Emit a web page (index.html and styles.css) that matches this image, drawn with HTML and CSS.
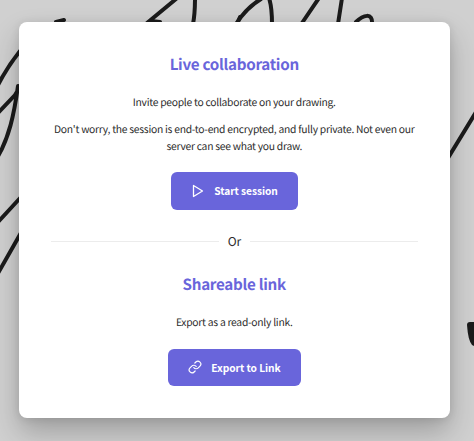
FILE: index.html
```
<!DOCTYPE html>
<html lang="en">
  <head>
    <meta charset="utf-8" />
    <title>Live collaboration</title>
    <meta name="viewport" content="width=device-width, initial-scale=1" />
    <link rel="stylesheet" href="styles.css" />
  </head>
  <body>
    <svg class="canvas" viewBox="0 0 474 441" aria-hidden="true">
      <path d="M-3 87C4 73 12 61 20 51M-1 112L15 95C18 91 20 87 22 82M-3 158C9 138 14 115 18 86" />
      <path d="M-1 221L22 196M-3 275L22 231" />
      <path d="M56 22L64 20M147 23L176 -1M151 21L160 22M195 -2C195 7 195 14 193 24M237 24L240 17" />
      <path d="M236 24C243 13 251 5 261 -1M269 -2C272 7 272 15 272 24M302 23L319 -2M342 -2L338 24M356 22C363 15 373 12 372 24" />
      <path d="M448 158L476 112" />
      <path class="blot" d="M467 325Q467 322 470 322H474V346L472 345Q468 340 467 325Z" />
    </svg>
    <div class="modal">
      <h3>Live collaboration</h3>
      <p class="intro">Invite people to collaborate on your drawing.</p>
      <p class="privacy">
        Don't worry, the session is end-to-end encrypted, and fully private. Not even our
        server can see what you draw.
      </p>
      <button class="start" type="button">
        <svg class="icon" viewBox="0 0 14 14">
          <path class="play" d="M2.5 1.5L11.5 7L2.5 12.5Z" />
        </svg>
        Start session
      </button>
      <div class="separator">Or</div>
      <h3>Shareable link</h3>
      <p class="intro">Export as a read-only link.</p>
      <button class="export" type="button">
        <svg class="icon" viewBox="0 0 24 24">
          <path d="M10 13a5 5 0 0 0 7.54.54l3-3a5 5 0 0 0-7.07-7.07l-1.72 1.71" />
          <path d="M14 11a5 5 0 0 0-7.54-.54l-3 3a5 5 0 0 0 7.07 7.07l1.71-1.71" />
        </svg>
        Export to Link
      </button>
    </div>
  </body>
</html>
```
FILE: styles.css
```
body {
  margin: 0;
  height: 441px;
  overflow: hidden;
  background-color: #d0d0d0;
  font-family: "Noto Sans CJK SC", "Noto Sans", sans-serif;
  color: #2b2b2b;
  text-rendering: geometricPrecision;
}

/* freehand strokes behind the dialog */
.canvas {
  position: absolute;
  top: 0;
  left: 0;
  width: 474px;
  height: 441px;
  fill: none;
  stroke: #1b1b1b;
  stroke-width: 4;
  stroke-linecap: round;
}

.canvas .blot {
  fill: #1b1b1b;
  stroke: none;
}

.modal {
  position: relative;
  box-sizing: border-box;
  width: 430.5px;
  height: 396.5px;
  margin: 21.5px 0 0 19px;
  padding: 30.5px 32px 0;
  display: flex;
  flex-direction: column;
  align-items: center;
  background-color: white;
  border-radius: 8px;
  box-shadow: 0 14px 28px rgba(0, 0, 0, 0.24), 0 1px 8px rgba(0, 0, 0, 0.1);
}

h3 {
  margin: 0;
  font-size: 15.2px;
  line-height: 24px;
  font-weight: 700;
  letter-spacing: -0.28px;
  color: #6965db;
}

p {
  margin: 0;
  font-size: 10.3px;
  line-height: 16.5px;
  letter-spacing: -0.26px;
  text-align: center;
}

.intro {
  margin-top: 18px;
}

.privacy {
  margin-top: 10.5px;
}

button {
  display: flex;
  align-items: center;
  justify-content: center;
  gap: 9.5px;
  height: 37.5px;
  padding: 0;
  border: none;
  border-radius: 6px;
  background-color: #6965db;
  color: white;
  font-family: inherit;
  font-size: 10.2px;
  font-weight: 700;
  letter-spacing: -0.04px;
}

.start {
  width: 127px;
  margin-top: 18px;
}

.export {
  width: 133px;
  margin-top: 18.5px;
}

.icon {
  width: 14px;
  height: 14px;
  fill: none;
  stroke: white;
  stroke-width: 2;
  stroke-linecap: round;
  stroke-linejoin: round;
}

.play {
  stroke-width: 1.3;
}

.separator {
  display: flex;
  align-items: center;
  width: 100%;
  margin: 22px 0 20px;
  gap: 9px;
  font-size: 12px;
  line-height: 20px;
  letter-spacing: -0.2px;
}

.separator::before,
.separator::after {
  content: "";
  flex: 1;
  height: 1px;
  background-color: #ececec;
}
```
